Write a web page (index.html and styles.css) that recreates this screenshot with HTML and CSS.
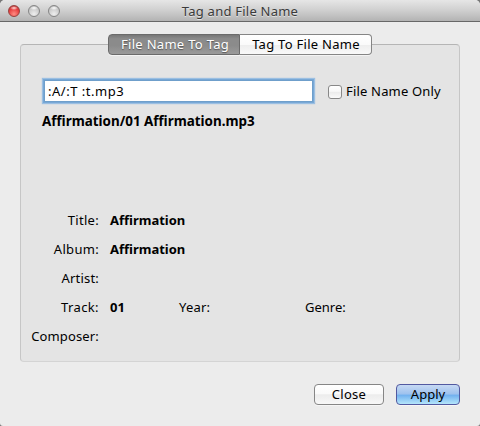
FILE: index.html
```html
<!DOCTYPE html>
<html lang="en">
<head>
<meta charset="utf-8">
<title>Tag and File Name</title>
<link rel="stylesheet" href="styles.css">
</head>
<body>
<div class="window">
  <header class="titlebar">
    <div class="lights"><i class="light red"></i><i class="light"></i><i class="light"></i></div>
    <h1><span class="title-text">Tag and File Name</span></h1>
  </header>
  <main class="content">
    <nav class="tabs">
      <button class="tab active"><span class="t-left">File Name To Tag</span></button>
      <button class="tab"><span class="t-right">Tag To File Name</span></button>
    </nav>
    <section class="panel">
      <div class="format-row">
        <div class="field"><span class="t-format">:A/:T :t.mp3</span></div>
        <label class="check"><i class="box"></i><span class="t-only">File Name Only</span></label>
      </div>
      <div class="preview"><b class="t-preview">Affirmation/01 Affirmation.mp3</b></div>
      <div class="tags">
        <span class="label t-title">Title:</span><b class="t-value">Affirmation</b>
        <span class="label t-album">Album:</span><b class="t-value">Affirmation</b>
        <span class="label t-artist">Artist:</span><b></b>
        <span class="label t-track">Track:</span><b class="t-num">01</b><span class="t-year">Year:</span><span class="t-genre">Genre:</span>
        <span class="label t-composer">Composer:</span><b></b>
      </div>
    </section>
    <footer class="actions">
      <button class="button close"><span class="t-close">Close</span></button>
      <button class="button apply"><span class="t-apply">Apply</span></button>
    </footer>
  </main>
</div>
</body>
</html>
```
FILE: styles.css
```css
* { box-sizing: border-box; }
body { margin: 0; background: #777; }
.window {
  width: 480px; height: 426px; overflow: hidden;
  border-radius: 5px 5px 3px 3px;
  background: #ececec; color: #000;
  font: 13px/18px "Noto Sans", "Open Sans", sans-serif;
}
button { font: inherit; color: inherit; padding: 0; margin: 0; }
b { font-weight: 700; }
.titlebar {
  display: grid; grid-template-columns: 60px 1fr 60px; align-items: center;
  height: 22px; padding: 0;
  background: linear-gradient(#e6e6e6, #cfcfcf 50%, #b3b3b3);
  border-bottom: 1px solid #686868;
}
.lights { display: flex; gap: 8px; padding-left: 8px; }
.light {
  width: 12px; height: 12px; flex: none; border-radius: 50%;
  border: 1px solid #858585;
  background: radial-gradient(ellipse 4px 2px at 50% 20%, #fff, transparent), radial-gradient(circle at 50% 80%, #eee, #c4c4c4 70%, #a5a5a5);
}
.light.red {
  border-color: #97423e;
  background: radial-gradient(ellipse 4px 2px at 50% 20%, #ffe3df, transparent), radial-gradient(circle at 50% 80%, #ff8d83, #e63c3d 60%, #a62729);
}
h1 {
  margin: 0; font: inherit; text-align: center; color: #3b3b3b;
  text-shadow: 0 1px 0 #e2e2e2; white-space: nowrap;
}
.title-text { letter-spacing: .23px; }
.content { padding: 12px 20px 0; }
.tabs { display: flex; width: 288px; height: 22px; margin: 0 auto -12px; padding: 0 12px; position: relative; z-index: 1; }
.tab {
  flex: 132px 0 0; height: 21px; line-height: 17px; padding: 0 0 1px 1px; white-space: nowrap;
  border: 1px solid #858585; border-left: 0; border-radius: 0 4px 4px 0;
  background: linear-gradient(#fff, #fafafa 50%, #ededed 51%, #f9f9f9);
  box-shadow: 0 1px 0 #f4f4f4;
}
.tab.active {
  color: #fff; border: 1px solid #6b6b6b; border-radius: 4px 0 0 4px;
  background: linear-gradient(#777, #8b8b8b 20%, #8b8b8b 55%, #9a9a9a);
  text-shadow: 0 1px 1px #555; padding-left: 2px;
}
.t-left { letter-spacing: .3px; }
.t-right { letter-spacing: .28px; }
.panel {
  height: 318px; padding: 34px 0 0 20px;
  border: 1px solid #c6c6c6; border-top-color: #b5b5b5; border-bottom-color: #d4d4d4;
  border-radius: 4px; background: #e4e4e4;
}
.format-row { display: flex; align-items: center; height: 25px; }
.field {
  width: 269px; height: 22px; margin: 0 0 1px 3px; padding-left: 3px;
  border: 1px solid #6f9fcb; background: #fff; line-height: 20px;
  box-shadow: 0 0 0 1px #78a8d6, 0 0 1px 2px #9bbfe2; white-space: pre;
}
.t-format { letter-spacing: .52px; }
.check { display: flex; align-items: center; gap: 4px; margin-left: 15px; line-height: 16px; }
.t-only { letter-spacing: .18px; margin-top: -2px; }
.box {
  width: 14px; height: 14px; border: 1px solid #888; border-radius: 3px;
  background: linear-gradient(#fff, #f8f8f8 45%, #ebebeb 50%, #fafafa);
}
.preview { height: 18px; margin: 8px 0 0 1px; white-space: nowrap; }
.t-preview { font-size: 13.42px; }
.tags {
  display: grid; grid-template-columns: 58px 80px 126px 1fr;
  grid-auto-rows: 29px; align-items: center; margin-top: 75px; white-space: nowrap;
}
.tags b { padding-left: 11px; }
.label { grid-column: 1; justify-self: end; }
.t-title, .t-album { letter-spacing: .3px; }
.t-artist { letter-spacing: .2px; }
.t-track { letter-spacing: .4px; }
.t-composer { letter-spacing: .15px; }
.t-year { letter-spacing: .2px; }
.actions { display: flex; justify-content: flex-end; gap: 12px; margin-top: 22px; }
.button {
  width: 70px; height: 21px; line-height: 18px; padding-bottom: 1px; border: 1px solid #868686; border-radius: 4px;
  background: linear-gradient(#fff, #fafafa 45%, #ececec 52%, #f8f8f8);
  box-shadow: 0 1px 0 #f6f6f6;
}
.t-close { letter-spacing: .3px; }
.apply {
  width: 64px; border-color: #5259a0;
  background: linear-gradient(#c6d9f3, #9dc1ee 48%, #70b0ef 53%, #b5e6fb);
}
```
